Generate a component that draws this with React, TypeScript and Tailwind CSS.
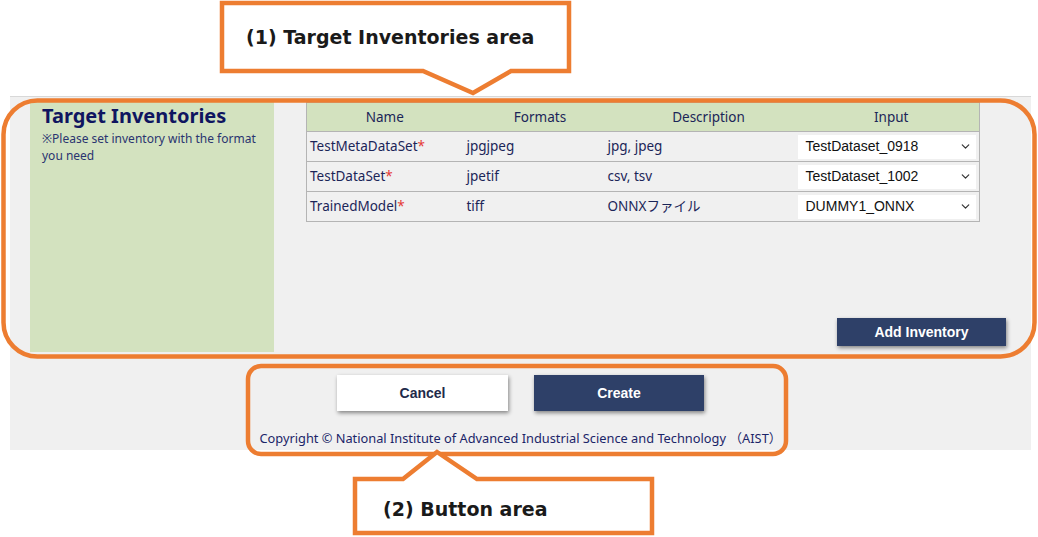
import { ChevronDown } from 'lucide-react';

const rows = [
  { name: 'TestMetaDataSet', formats: 'jpgjpeg', desc: 'jpg, jpeg', input: 'TestDataset_0918' },
  { name: 'TestDataSet', formats: 'jpetif', desc: 'csv, tsv', input: 'TestDataset_1002' },
  { name: 'TrainedModel', formats: 'tiff', desc: 'ONNXファイル', input: 'DUMMY1_ONNX' },
];

const tahoma = "font-['Noto_Sans','Noto_Sans_CJK_JP',sans-serif]";
const verdana = "font-['DejaVu_Sans',sans-serif]";
const arial = "font-['Liberation_Sans',Arial,sans-serif]";

function InventoryTable() {
  return (
    <table className={`w-[674px] border border-[#b4b4b4] border-collapse text-[13.5px] text-[#1b2558] ${tahoma}`}>
      <thead>
        <tr className="bg-[#d3e2bf] h-[29px]">
          <th className="w-[156px] font-normal text-center">Name</th>
          <th className="w-[141px] font-normal text-center pl-[14px]">Formats</th>
          <th className="w-[192px] font-normal text-center pl-[18px]">Description</th>
          <th className="font-normal text-center pl-[8px]">Input</th>
        </tr>
      </thead>
      <tbody>
        {rows.map((r) => (
          <tr key={r.name} className="h-[30px] border-t border-[#b4b4b4]">
            <td className="pl-[3px]">
              {r.name}
              <span className="text-[#e53935]">*</span>
            </td>
            <td className="pl-[4px]">{r.formats}</td>
            <td className="pl-[4px]">{r.desc}</td>
            <td className="pl-[2px] pr-[3px]">
              <div className={`h-[24px] w-[178px] bg-white flex items-center justify-between pl-[8px] pr-[4px] text-[14px] text-[#111] ${arial}`}>
                <span>{r.input}</span>
                <ChevronDown size={13} strokeWidth={2.2} className="text-[#333]" />
              </div>
            </td>
          </tr>
        ))}
      </tbody>
    </table>
  );
}

function Callouts() {
  return (
    <>
      <svg className="absolute left-0 top-0 pointer-events-none" width="1038" height="537">
        <g fill="none" stroke="#ed7d31" strokeWidth="4.5">
          <path d="M222 3 H569 V71 H511 L473 93 L423 71 H222 Z" fill="white" />
          <rect x="3.5" y="100.5" width="1031" height="256" rx="34" />
          <rect x="248" y="366" width="538" height="88" rx="13" />
          <path d="M355 479 H403 L437 452 L477 479 H652 V533 H355 Z" fill="white" />
        </g>
      </svg>
      <div className={`absolute left-[246px] top-[23px] text-[19px] font-bold text-[#1a1a1a] ${verdana}`}>
        (1) Target Inventories area
      </div>
      <div className={`absolute left-[383px] top-[495px] text-[19px] font-bold text-[#1a1a1a] ${verdana}`}>
        (2) Button area
      </div>
    </>
  );
}

export default function App() {
  return (
    <div className="relative w-[1038px] h-[537px] bg-white overflow-hidden">
      <div className="pt-[96px] pl-[10px]">
        <div className="w-[1021px] h-[354px] bg-[#f0f0f0] border-t border-[#d8d8d8] flex flex-col">
          <div className="flex pt-[3px]">
            <aside className={`ml-[20px] w-[244px] h-[252px] bg-[#d3e2bf] pl-[12px] pt-[3px] ${tahoma}`}>
              <h1 className="text-[20px] font-bold text-[#0f1560] leading-[26px]">Target Inventories</h1>
              <p className="text-[12px] text-[#2a3470] leading-[17px] mt-[1px]">
                ※Please set inventory with the format
                <br />
                you need
              </p>
            </aside>
            <div className="ml-[32px] w-[700px] flex flex-col pt-[2px]">
              <InventoryTable />
              <div className="mt-auto mb-[6px] flex justify-end">
                <button className={`w-[169px] h-[28px] bg-[#2e4068] text-white text-[14px] font-bold shadow-[1px_2px_4px_rgba(0,0,0,0.45)] ${arial}`}>
                  Add Inventory
                </button>
              </div>
            </div>
          </div>
          <div className="flex justify-center gap-[26px] mt-[23px]">
            <button className={`w-[171px] h-[36px] bg-white text-[#1f2a4a] text-[14px] font-bold shadow-[1px_2px_4px_rgba(0,0,0,0.45)] ${arial}`}>
              Cancel
            </button>
            <button className={`w-[170px] h-[36px] bg-[#2e4068] text-white text-[14px] font-bold shadow-[1px_2px_4px_rgba(0,0,0,0.45)] ${arial}`}>
              Create
            </button>
          </div>
          <div className={`mt-[18px] text-center text-[12.8px] text-[#1b2568] ${tahoma}`}>
            Copyright © National Institute of Advanced Industrial Science and Technology （AIST）
          </div>
        </div>
      </div>
      <Callouts />
    </div>
  );
}
